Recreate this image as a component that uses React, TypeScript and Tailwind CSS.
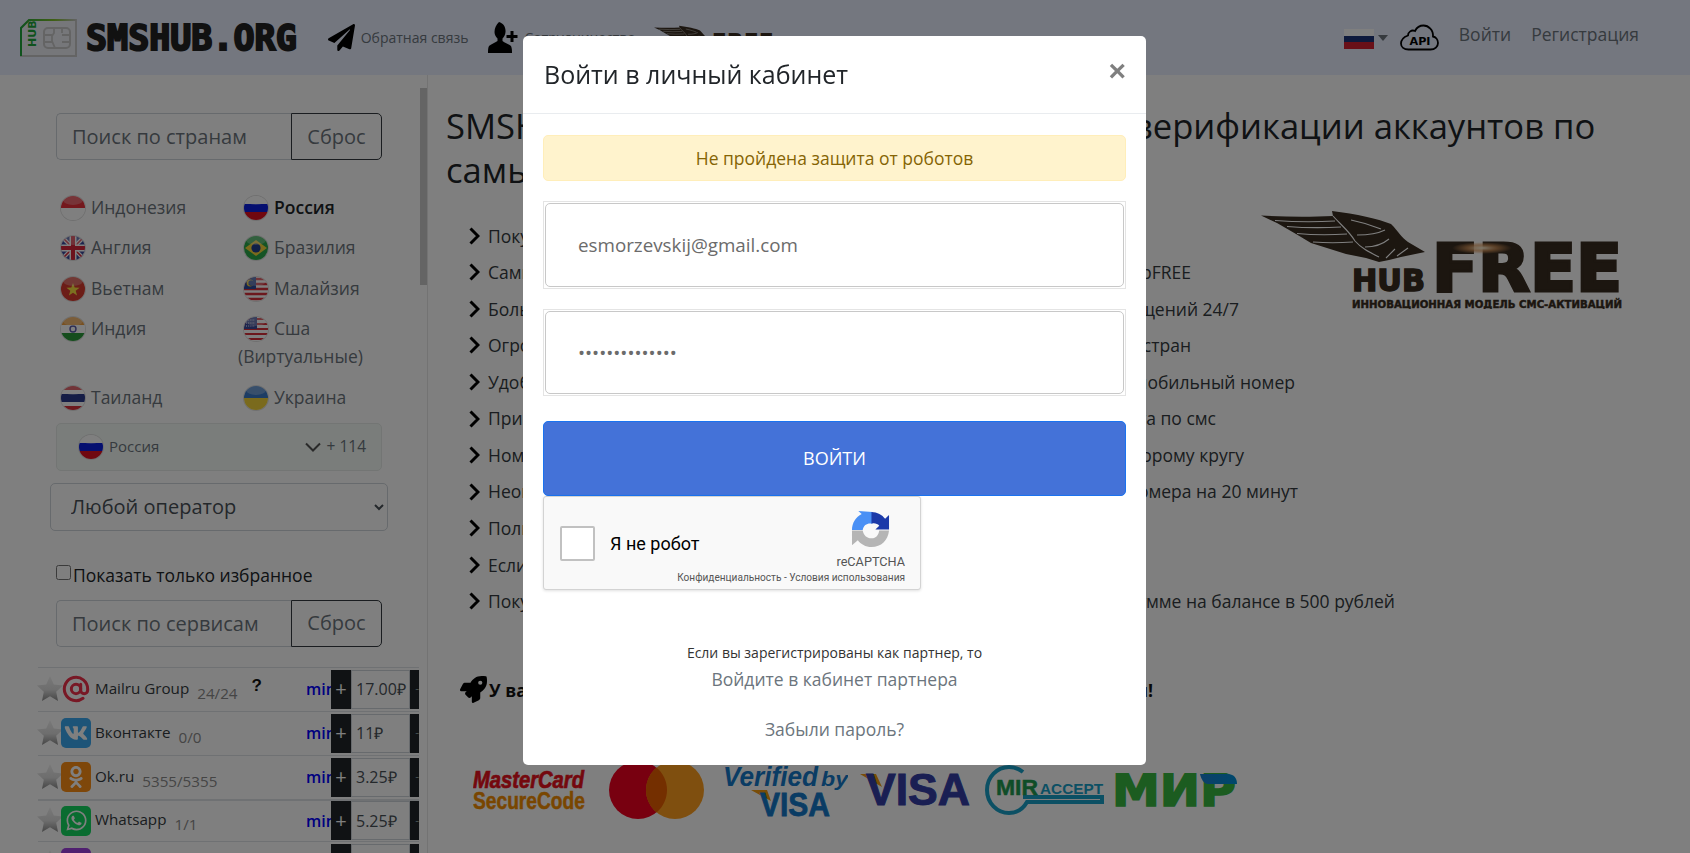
import { FaOdnoklassniki, FaPaperPlane, FaRocket, FaVk, FaWhatsapp } from "react-icons/fa";
import { AtSign } from "lucide-react";

const countries = [
  ["id", "Индонезия"],
  ["ru", "Россия"],
  ["gb", "Англия"],
  ["br", "Бразилия"],
  ["vn", "Вьетнам"],
  ["my", "Малайзия"],
  ["in", "Индия"],
  ["us", "Сша (Виртуальные)"],
  ["th", "Таиланд"],
  ["ua", "Украина"],
];

const features = [
  { a: "Покупка виртуальных номеров для регистрации" },
  { a: "Самые низкие цены благодаря", b: "модели HubFREE", w: "w-[703px]" },
  { a: "Большая база номеров", b: "для получения сообщений 24/7", w: "w-[751px]" },
  { a: "Огромный выбор", b: "номеров более 100 стран", w: "w-[703px]" },
  { a: "Удобный сервис", b: "приём смс на мобильный номер", w: "w-[807px]" },
  { a: "Прием смс", b: "для активации аккаунта по смс", w: "w-[728px]" },
  { a: "Номера", b: "не выдаются по второму кругу", w: "w-[756px]" },
  { a: "Неограниченное", b: "время аренды номера на 20 минут", w: "w-[810px]" },
  { a: "Полная анонимность при регистрации" },
  { a: "Если смс не придёт, деньги вернутся" },
  { a: "Покупка", b: "скидка при сумме на балансе в 500 рублей", w: "w-[907px]" },
];

const services = [
  { name: "Mailru Group", count: "24/24", price: "17.00₽", icon: "mail", help: true, row: "h-[44px] border-t" },
  { name: "Вконтакте", count: "0/0", price: "11₽", icon: "vk", row: "h-[44px] border-t" },
  { name: "Ok.ru", count: "5355/5355", price: "3.25₽", icon: "ok", row: "h-[44px] border-t" },
  { name: "Whatsapp", count: "1/1", price: "5.25₽", icon: "wa", row: "h-[42px] border-t-2" },
  { name: "Viber", count: "3/3", price: "9.00₽", icon: "viber", row: "h-[44px] border-t" },
];

function Flag({ code }: { code: string }) {
  return (
    <svg viewBox="0 0 24 24" className="inline-block h-[24px] w-[24px] rounded-full align-[-6px] ring-1 ring-[#e0e0e0]">
      {code === "id" && (<><rect width="24" height="24" fill="#fff" /><rect width="24" height="12" fill="#e8303a" /></>)}
      {code === "ru" && (<><rect width="24" height="8" fill="#fff" /><rect y="8" width="24" height="8" fill="#0a1fe0" /><rect y="16" width="24" height="8" fill="#e01020" /></>)}
      {code === "gb" && (
        <>
          <rect width="24" height="24" fill="#3a4a9c" />
          <path d="M0 0 24 24M24 0 0 24" stroke="#fff" strokeWidth="4" />
          <path d="M0 0 24 24M24 0 0 24" stroke="#d8263a" strokeWidth="1.5" />
          <path d="M12 0V24M0 12H24" stroke="#fff" strokeWidth="7" />
          <path d="M12 0V24M0 12H24" stroke="#d8263a" strokeWidth="4" />
        </>
      )}
      {code === "br" && (<><rect width="24" height="24" fill="#2aa84a" /><path d="M1 12 12 4l11 8-11 8z" fill="#f6d53a" /><circle cx="12" cy="12" r="4.6" fill="#23408f" /></>)}
      {code === "vn" && (<><rect width="24" height="24" fill="#d83a2e" /><path d="m12 6 1.7 4.6 4.9.2-3.9 3 1.4 4.7L12 15.8l-4.1 2.7 1.4-4.7-3.9-3 4.9-.2z" fill="#f8e040" /></>)}
      {code === "my" && (
        <>
          <rect width="24" height="24" fill="#fff" />
          <path d="M0 2H24M0 7H24M0 12H24M0 17H24M0 22H24" stroke="#d8303a" strokeWidth="2.4" />
          <rect width="12" height="12" fill="#2c4a9c" />
          <circle cx="6" cy="6" r="3.4" fill="#f4d03a" />
          <circle cx="7.2" cy="6" r="2.8" fill="#2c4a9c" />
        </>
      )}
      {code === "in" && (<><rect width="24" height="8" fill="#f0a040" /><rect y="8" width="24" height="8" fill="#fff" /><rect y="16" width="24" height="8" fill="#2a9a3a" /><circle cx="12" cy="12" r="3" fill="none" stroke="#5a5aa8" strokeWidth="1.4" /></>)}
      {code === "us" && (
        <>
          <rect width="24" height="24" fill="#fff" />
          <path d="M0 2H24M0 7H24M0 12H24M0 17H24M0 22H24" stroke="#d8303a" strokeWidth="2.2" />
          <rect width="13" height="12" fill="#3a4a9c" />
          <path d="M2 3h9M2 6h9M2 9h9" stroke="#fff" strokeWidth="1" strokeDasharray="1 1.2" />
        </>
      )}
      {code === "th" && (<><rect width="24" height="24" fill="#fff" /><rect width="24" height="4" fill="#d8303a" /><rect y="20" width="24" height="4" fill="#d8303a" /><rect y="8" width="24" height="8" fill="#2a3a8c" /></>)}
      {code === "ua" && (<><rect width="24" height="12" fill="#3a7ac8" /><rect y="12" width="24" height="12" fill="#f4d53a" /></>)}
      <ellipse cx="12" cy="4" rx="10" ry="5" fill="#fff" opacity="0.28" />
    </svg>
  );
}

function Star() {
  return (
    <svg viewBox="0 0 24 24" className="-ml-px mb-px h-[26px] w-[26px] shrink-0">
      <defs>
        <linearGradient id="star" x1="0" y1="0" x2="0" y2="1">
          <stop offset="0" stopColor="#f2f2f2" />
          <stop offset="0.55" stopColor="#dcdcdc" />
          <stop offset="1" stopColor="#8c8c8c" />
        </linearGradient>
      </defs>
      <path d="m12 0 3.5 7.800 8.500 1-6.300 5.800 1.700 8.400L12 18.800 4.600 23l1.700-8.400L0 8.800l8.500-1z" fill="url(#star)" />
    </svg>
  );
}

function ServiceIcon({ kind }: { kind: string }) {
  if (kind === "mail") return <AtSign className="h-[28px] w-[28px] text-[#f0304a]" strokeWidth={2.6} />;
  const box = "flex h-[30px] w-[30px] items-center justify-center rounded-[5px] text-white";
  if (kind === "vk") return <div className={`${box} bg-[#3aa8f0]`}><FaVk size={24} /></div>;
  if (kind === "ok") return <div className={`${box} bg-[#fc8f14] text-[#fff2dc]`}><FaOdnoklassniki size={22} /></div>;
  if (kind === "wa") return <div className={`${box} bg-[#14d860]`}><FaWhatsapp size={23} /></div>;
  return <div className={`${box} bg-[#a040e0]`} />;
}

function Wing({ className }: { className: string }) {
  return (
    <svg viewBox="0 0 164 52" className={className}>
      <path d="M0 4.500C25 6 50 6 72 5L71 0C95 3 118 8 130 13C137 20 141 27 147 31L164 41L140 46L128 49L118 51L105 47L85 43L50 32L35 23L16 12Z" fill="#382c20" />
      <path d="M14 9.500C35 11 55 11 74 10M26 15.500C45 17 62 17 80 16M36 22.500C52 24 70 24 86 23M52 31C65 32 78 32 92 31M72 5C80 14 88 20 94 30C100 37 108 41 118 46M90 9C105 12 115 16 120 18M96 24C110 24 118 22 124 19M104 36C115 36 122 33 128 28M125 47 134 38M136 45 147 37" fill="none" stroke="#fff" strokeWidth="1.100" />
    </svg>
  );
}

function SimLogo() {
  return (
    <svg viewBox="0 0 57 38" className="h-[38px] w-[57px] shrink-0">
      <defs>
        <linearGradient id="simtop" x1="0" y1="0" x2="1" y2="0">
          <stop offset="0" stopColor="#1fa53a" />
          <stop offset="0.6" stopColor="#7fbf2a" />
          <stop offset="1" stopColor="#c4c4c4" />
        </linearGradient>
      </defs>
      <path d="M1 9 9 1H56V37H1Z" fill="#eceef4" stroke="#c9c9c9" strokeWidth="2" />
      <path d="M1 37V9L9 1H56" fill="none" stroke="url(#simtop)" strokeWidth="2" />
      <text x="0" y="0" transform="translate(16 28) rotate(-90)" fontFamily="'DejaVu Sans'" fontWeight="700" fontSize="11" fill="#1fa53a">HUB</text>
      <rect x="24" y="9" width="26" height="20" rx="4" fill="none" stroke="#c8c8c8" strokeWidth="2" />
      <path d="M24 16H32M24 23H32M42 16H50M42 23H50M34 9V14L32 17V22L35 29M42 9V14" fill="none" stroke="#c8c8c8" strokeWidth="1.800" />
    </svg>
  );
}

function UserPlus() {
  return (
    <svg viewBox="0 0 30 31" className="ml-[20px] h-[31px] w-[30px] shrink-0">
      <path d="M11 0C15 1 18 5 17.500 10C17.300 13 16 15 14.500 16.500V19C17 21 21 22 23 24C24 26 24 29 24 31H0C0 28 0 26 1 24C3 22 7 21 9.500 19V16.500C8 15 6.500 13 6.500 10C6.500 6 8 3 11 0Z" fill="#000" />
      <path d="M24 9V20M18.500 14.500H29.500" stroke="#000" strokeWidth="3" />
    </svg>
  );
}

function RecaptchaLogo() {
  return (
    <svg viewBox="0 0 40 40" className="h-[39px] w-[39px]">
      <path d="M1 19.500C1 12 5 6 11 3L7.500 0 22 1V13C17 12 13 14 12 19.500Z" fill="#4a90f5" />
      <path d="M21 1C27 1 32 4 35 8L39 4V19H25L29 15C27 13 24 12 21 13Z" fill="#1c3aa9" />
      <path d="M1 20H12C13 25 16 28 21 28C26 28 28 25 29 20H39C38 30 31 37 21 37C15 37 10 34 7 30L1 35Z" fill="#b5b5b5" />
    </svg>
  );
}

function CloudApi() {
  return (
    <svg viewBox="0 0 40 27" className="h-[27px] w-[41px] shrink-0">
      <path d="M9 25.500H31C35.500 25.500 38.500 22.500 38.500 19C38.500 15.500 36 13 33.500 12.500C34 6 29 1.500 24 1.500C20 1.500 17 4 15.500 7C12 5.500 8.500 8 8.500 11.500C4.500 13 1.500 16 1.500 19.500C1.500 23 4.500 25.500 9 25.500Z" fill="none" stroke="#000" strokeWidth="1.800" />
      <text x="10" y="20.500" fontFamily="'DejaVu Sans'" fontWeight="700" fontSize="10" textLength="21" lengthAdjust="spacingAndGlyphs">API</text>
    </svg>
  );
}

function SearchBox({ placeholder }: { placeholder: string }) {
  return (
    <div className="ml-[56px] flex h-[47px] w-[326px]">
      <input readOnly placeholder={placeholder} className="h-full w-[235px] rounded-l-[5px] border border-r-0 border-[#ced4da] bg-white pl-[15px] text-[20px] placeholder:text-[#6c757d]" />
      <div className="flex h-full flex-1 items-center justify-center rounded-r-[5px] border border-[#343a40] text-[20px] text-[#6c757d]">Сброс</div>
    </div>
  );
}

function Sidebar() {
  return (
    <aside className="relative h-[778px] w-[428px] shrink-0 overflow-hidden border-r border-[#e6e6e6] pt-[38px]">
      <div className="absolute left-[420px] top-[13px] h-[197px] w-[7px] bg-[#c8c8c8]" />
      <SearchBox placeholder="Поиск по странам" />

      <div className="ml-[55px] mt-[26.250px] grid w-[327px] grid-cols-[183px_144px] text-[17.500px] leading-[28px] text-[#6c757d]">
        {countries.map(([code, name]) => (
          <div key={code} className={code === "ru" ? "py-[6.250px] font-semibold text-[#212529]" : "py-[6.250px]"}>
            <span className="ml-[6px] mr-[6px]"><Flag code={code} /></span>
            {name}
          </div>
        ))}
      </div>

      <div className="ml-[56px] mt-[5.750px] flex h-[48px] w-[326px] items-center rounded-[5px] border border-[#e6ebe8] bg-[#f4fbf7] pl-[22px] pr-[15px]">
        <Flag code="ru" />
        <span className="ml-[6px] text-[15px] text-[#6c757d]">Россия</span>
        <svg viewBox="0 0 16 10" className="ml-auto h-[10px] w-[16px]"><path d="M1 1.500 8 8.500 15 1.500" fill="none" stroke="#555" strokeWidth="2" /></svg>
        <span className="ml-[6px] text-[15.500px] text-[#6c757d]">+ 114</span>
      </div>

      <select className="ml-[50px] mt-[12px] block h-[48px] w-[338px] rounded-[5px] border border-[#ced4da] bg-white pl-[16px] text-[20px] text-[#495057]">
        <option>Любой оператор</option>
      </select>

      <label className="ml-[56px] mt-[31px] flex h-[28px] items-center text-[17.500px] text-[#212529]">
        <input type="checkbox" className="mb-[6px] mr-[2px] h-[15px] w-[15px]" />
        Показать только избранное
      </label>
      <div className="mt-[10px]"><SearchBox placeholder="Поиск по сервисам" /></div>

      <div className="ml-[38px] mt-[20px] w-[381px]">
        {services.map((s) => (
          <div key={s.name} className={`flex items-center border-[#dee2e6] ${s.row}`}>
            <Star />
            <div className="-ml-[3px] flex w-[32px] justify-center"><ServiceIcon kind={s.icon} /></div>
            <span className="mb-[2px] ml-[3px] text-[15.200px] text-[#343a40]">{s.name}</span>
            <span className="ml-[8px] mt-[8px] text-[15.200px] text-[#8a8a8a]">{s.count}</span>
            {s.help && <span className="mb-[6px] ml-[14px] font-['Liberation_Sans'] text-[17px] font-bold text-[#111]">?</span>}
            <span className="ml-auto w-[25px] overflow-hidden text-[16px] font-semibold text-[#0000ff]">min</span>
            <div className="flex h-[39px] w-[20px] items-center justify-center bg-[#212529] text-[20px] text-white">+</div>
            <div className="flex h-[39px] w-[59px] items-center border border-[#ced4da] bg-white pl-[4px] text-[16px] text-[#495057]">{s.price}</div>
            <div className="flex h-[39px] w-[9px] items-center justify-end overflow-hidden bg-[#212529] text-[12px] text-[#8a9a9a]">-</div>
          </div>
        ))}
      </div>
    </aside>
  );
}

function HubFreeLogo() {
  return (
    <svg viewBox="0 0 362 98" className="absolute left-[833px] top-[136px] h-[98px] w-[362px]">
      <defs>
        <radialGradient id="glow">
          <stop offset="0" stopColor="#fff4d8" />
          <stop offset="0.5" stopColor="#e8a060" stopOpacity="0.7" />
          <stop offset="1" stopColor="#e8a060" stopOpacity="0" />
        </radialGradient>
      </defs>
      <foreignObject width="164" height="52"><Wing className="h-[52px] w-[164px]" /></foreignObject>
      <g fontFamily="'DejaVu Sans'" fontWeight="700" fill="#382c20" stroke="#382c20">
        <text x="171" y="80" fontSize="66" strokeWidth="3" textLength="190" lengthAdjust="spacingAndGlyphs">FREE</text>
        <text x="91" y="80" fontSize="30" strokeWidth="1.500" textLength="73" lengthAdjust="spacingAndGlyphs">HUB</text>
        <text x="91" y="97" fontSize="11" strokeWidth="0.500" textLength="270" lengthAdjust="spacingAndGlyphs">ИННОВАЦИОННАЯ МОДЕЛЬ СМС-АКТИВАЦИЙ</text>
      </g>
      <ellipse cx="221" cy="37" rx="30" ry="6" fill="url(#glow)" />
    </svg>
  );
}

function PaymentLogos() {
  return (
    <div className="ml-[27px] mt-[57px] flex items-center">
      <svg viewBox="0 0 113 42" className="h-[42px] w-[113px]">
        <text x="0" y="19" fontFamily="'Liberation Sans'" fontWeight="700" fontStyle="italic" fontSize="23" fill="#e8101c" stroke="#e8101c" strokeWidth="0.700" textLength="111" lengthAdjust="spacingAndGlyphs">MasterCard</text>
        <text x="0" y="40" fontFamily="'Liberation Sans'" fontWeight="700" fontSize="24" fill="#f28c00" stroke="#f28c00" strokeWidth="0.500" textLength="112" lengthAdjust="spacingAndGlyphs">SecureCode</text>
      </svg>
      <svg viewBox="0 0 95 58" className="ml-[23px] h-[58px] w-[95px]">
        <ellipse cx="29" cy="29" rx="29" ry="29" fill="#f00020" />
        <ellipse cx="66" cy="29" rx="29" ry="29" fill="#ff9f1e" />
        <path d="M47.500 6.500C41 12 37 20 37 29C37 38 41 46 47.500 51.500C54 46 58 38 58 29C58 20 54 12 47.500 6.500Z" fill="#e85e00" />
      </svg>
      <svg viewBox="0 0 125 54" className="ml-[19px] h-[54px] w-[125px]">
        <text x="0" y="23" fontFamily="'Liberation Sans'" fontWeight="700" fontStyle="italic" fontSize="27" fill="#1478c8" textLength="95" lengthAdjust="spacingAndGlyphs">Verified</text>
        <text x="98" y="23" fontFamily="'Liberation Sans'" fontWeight="700" fontStyle="italic" fontSize="20" fill="#1478c8" textLength="27" lengthAdjust="spacingAndGlyphs">by</text>
        <path d="M28 27H44L48 38Z" fill="#f29a10" />
        <text x="37" y="53" fontFamily="'Liberation Sans'" fontWeight="700" fontSize="33" fill="#1478c8" stroke="#1478c8" strokeWidth="0.800" textLength="70" lengthAdjust="spacingAndGlyphs">VISA</text>
      </svg>
      <svg viewBox="0 0 112 34" className="ml-[12px] h-[34px] w-[112px]">
        <path d="M0 1H16L22 14Z" fill="#f29a10" />
        <text x="6" y="32" fontFamily="'Liberation Sans'" fontWeight="700" fontSize="44" fill="#343ea6" stroke="#343ea6" strokeWidth="1" textLength="104" lengthAdjust="spacingAndGlyphs">VISA</text>
      </svg>
      <svg viewBox="0 0 120 50" className="ml-[13px] h-[50px] w-[120px]">
        <path d="M38 7C33 3 28 2 24 2C12 2 2 12 2 25C2 38 12 48 24 48C32 48 38 44 42 37H117V32H38" fill="none" stroke="#18a0c8" strokeWidth="4" />
        <text x="11" y="30" fontFamily="'Liberation Sans'" fontWeight="700" fontSize="22" fill="#1f9a50" stroke="#1f9a50" strokeWidth="0.500" textLength="42" lengthAdjust="spacingAndGlyphs">MIR</text>
        <text x="55" y="29" fontFamily="'Liberation Sans'" fontWeight="700" fontSize="15" fill="#18a0c8" textLength="63" lengthAdjust="spacingAndGlyphs">ACCEPT</text>
      </svg>
      <svg viewBox="0 0 125 34" className="ml-[7px] h-[34px] w-[125px]">
        <defs>
          <linearGradient id="mir" x1="0" y1="0" x2="1" y2="0">
            <stop offset="0" stopColor="#1a7fd0" />
            <stop offset="1" stopColor="#0090d8" />
          </linearGradient>
        </defs>
        <text x="0" y="33" fontFamily="'DejaVu Sans'" fontWeight="700" fontSize="44" fill="#38b840" stroke="#38b840" strokeWidth="1.500" textLength="88" lengthAdjust="spacingAndGlyphs">МИ</text>
        <text x="88" y="33" fontFamily="'DejaVu Sans'" fontWeight="700" fontSize="44" fill="#38b840" stroke="#38b840" strokeWidth="1.500" textLength="36" lengthAdjust="spacingAndGlyphs">Р</text>
        <path d="M88 1H115C122 1 125 5 125 11H96C92 11 89 6 88 1Z" fill="url(#mir)" />
      </svg>
    </div>
  );
}

function Main() {
  return (
    <main className="relative h-[778px] flex-1 overflow-hidden pl-[18px] pt-[29px]">
      <h1 className="w-[1180px] text-[34.600px] font-normal leading-[44px] text-[#212529]">
        SMSHUB — <span className="mr-[7.500px]">удобный</span> онлайн сервис для верификации аккаунтов по самым низким ценам
      </h1>
      <HubFreeLogo />
      <ul className="mt-[25.500px]">
        {features.map((f) => (
          <li key={f.a} className="flex h-[36.550px] items-center whitespace-nowrap text-[17.500px] text-[#343a40]">
            <svg viewBox="0 0 11 18" className="ml-[23px] mr-[8px] h-[18px] w-[11px] shrink-0"><path d="M1.500 1.500 9 9l-7.500 7.500" fill="none" stroke="#000" strokeWidth="3" /></svg>
            <div className={`flex justify-between ${f.w ?? ""}`}>
              <span>{f.a}</span>
              {f.b && <span>{f.b}</span>}
            </div>
          </li>
        ))}
      </ul>
      <div className="ml-[14px] mt-[56.300px] flex h-[28px] items-center whitespace-nowrap text-[17.500px] font-bold text-[#111]">
        <FaRocket size={27} className="mr-[2px] shrink-0 text-black" />
        <div className="flex w-[664px] justify-between">
          <span>У вас есть вопросы?</span>
          <span>Пишите нам!</span>
        </div>
      </div>
      <PaymentLogos />
    </main>
  );
}

function LoginModal() {
  return (
    <div className="fixed inset-0 flex justify-center bg-black/50 pr-[21px] pt-[36px]">
      <div className="h-[729px] w-[623px] rounded-[5px] bg-white">
        <div className="relative flex h-[78px] items-center border-b border-[#e9ecef] pl-[21px]">
          <h2 className="text-[25px] font-normal text-[#212529]">Войти в личный кабинет</h2>
          <span className="absolute right-[20px] top-[26px] font-['Liberation_Sans'] text-[30px] font-bold leading-[17px] text-[#7f7f7f]">×</span>
        </div>
        <div className="px-[20px]">
          <div className="mt-[21px] flex h-[46px] items-center justify-center rounded-[5px] border border-[#ffeeba] bg-[#fff3cd] text-[17.500px] text-[#856404]">
            Не пройдена защита от роботов
          </div>
          <div className="mt-[20px] h-[88px] border border-[#e4e4e4] p-px">
            <input readOnly defaultValue="esmorzevskij@gmail.com" className="h-full w-full rounded-[5px] border border-[#c8c8c8] pl-[32px] text-[18.800px] text-[#6b6b6b]" />
          </div>
          <div className="mt-[20px] h-[87px] border border-[#e4e4e4] p-px">
            <input readOnly type="password" defaultValue="12345678901234" className="h-full w-full rounded-[5px] border border-[#c8c8c8] pl-[32px] text-[18.800px] text-[#6b6b6b]" />
          </div>
          <div className="mt-[25px] flex h-[75px] items-center justify-center rounded-[5px] border border-[#1a73f0] bg-[#4472d8] text-[18px] font-medium text-white">
            ВОЙТИ
          </div>
          <div className="flex h-[94px] w-[378px] items-center rounded-[3px] border border-[#d3d3d3] bg-[#f9f9f9] pl-[16px] shadow-[0_1px_3px_rgba(0,0,0,0.12)]">
            <div className="h-[35px] w-[35px] rounded-[2px] border-2 border-[#c1c1c1] bg-white" />
            <span className="ml-[15px] w-[50px] whitespace-nowrap font-['Roboto'] text-[18px] text-black">Я не робот</span>
            <div className="ml-auto mr-[15px] flex w-[230px] flex-col items-end self-start pt-[14px] font-['Roboto'] text-[#555]">
              <div className="mr-[15px]"><RecaptchaLogo /></div>
              <div className="mt-[5px] text-[12.700px] leading-[14px]">reCAPTCHA</div>
              <div className="mt-[3px] whitespace-nowrap text-[10.100px] leading-[12px]">Конфиденциальность - Условия использования</div>
            </div>
          </div>
        </div>
        <p className="mt-[53px] text-center text-[14px] leading-[20px] text-[#333]">Если вы зарегистрированы как партнер, то</p>
        <p className="mt-[3px] text-center text-[17.500px] leading-[26px] text-[#6c757d]">Войдите в кабинет партнера</p>
        <p className="mt-[24px] text-center text-[17.500px] leading-[26px] text-[#6c757d]">Забыли пароль?</p>
      </div>
    </div>
  );
}

export default function App() {
  return (
    <div className="h-[853px] overflow-hidden bg-white font-['Open_Sans',sans-serif]">
      <header className="flex h-[75px] items-center bg-[#e8eeff] pl-[20px] pr-[51px]">
        <SimLogo />
        <span className="ml-[9px] mt-[2px] font-['DejaVu_Sans_Mono',monospace] text-[35px] font-bold leading-none text-[#222] [-webkit-text-stroke:2px_#222]">SMSHUB.ORG</span>
        <FaPaperPlane size={27} className="ml-[31px] text-black" />
        <span className="ml-[6px] mb-[1px] text-[14px] text-[#6c757d]">Обратная связь</span>
        <UserPlus />
        <span className="ml-[6px] text-[14px] text-[#6c757d]">Сотрудничество</span>
        <div className="ml-[18px] mt-[25px] flex self-start">
          <Wing className="h-[20px] w-[58px]" />
          <span className="pt-[5px] font-['DejaVu_Sans'] text-[22px] font-bold leading-[24px] text-[#382c20]">FREE</span>
        </div>
        <span className="ml-auto flex h-[20px] w-[30px] flex-col mt-[3px]">
          <span className="flex-1 bg-white" />
          <span className="flex-1 bg-[#1c3578]" />
          <span className="flex-1 bg-[#d32030]" />
        </span>
        <span className="ml-[4px] mr-[11px] h-0 w-0 border-x-[5.500px] border-t-[6px] border-x-transparent border-t-[#6c757d]" />
        <CloudApi />
        <span className="mb-[6px] ml-[19px] text-[17.500px] text-[#6c757d]">Войти</span>
        <span className="mb-[6px] ml-[20px] text-[17.500px] text-[#6c757d]">Регистрация</span>
      </header>
      <div className="flex">
        <Sidebar />
        <Main />
      </div>
      <LoginModal />
    </div>
  );
}
